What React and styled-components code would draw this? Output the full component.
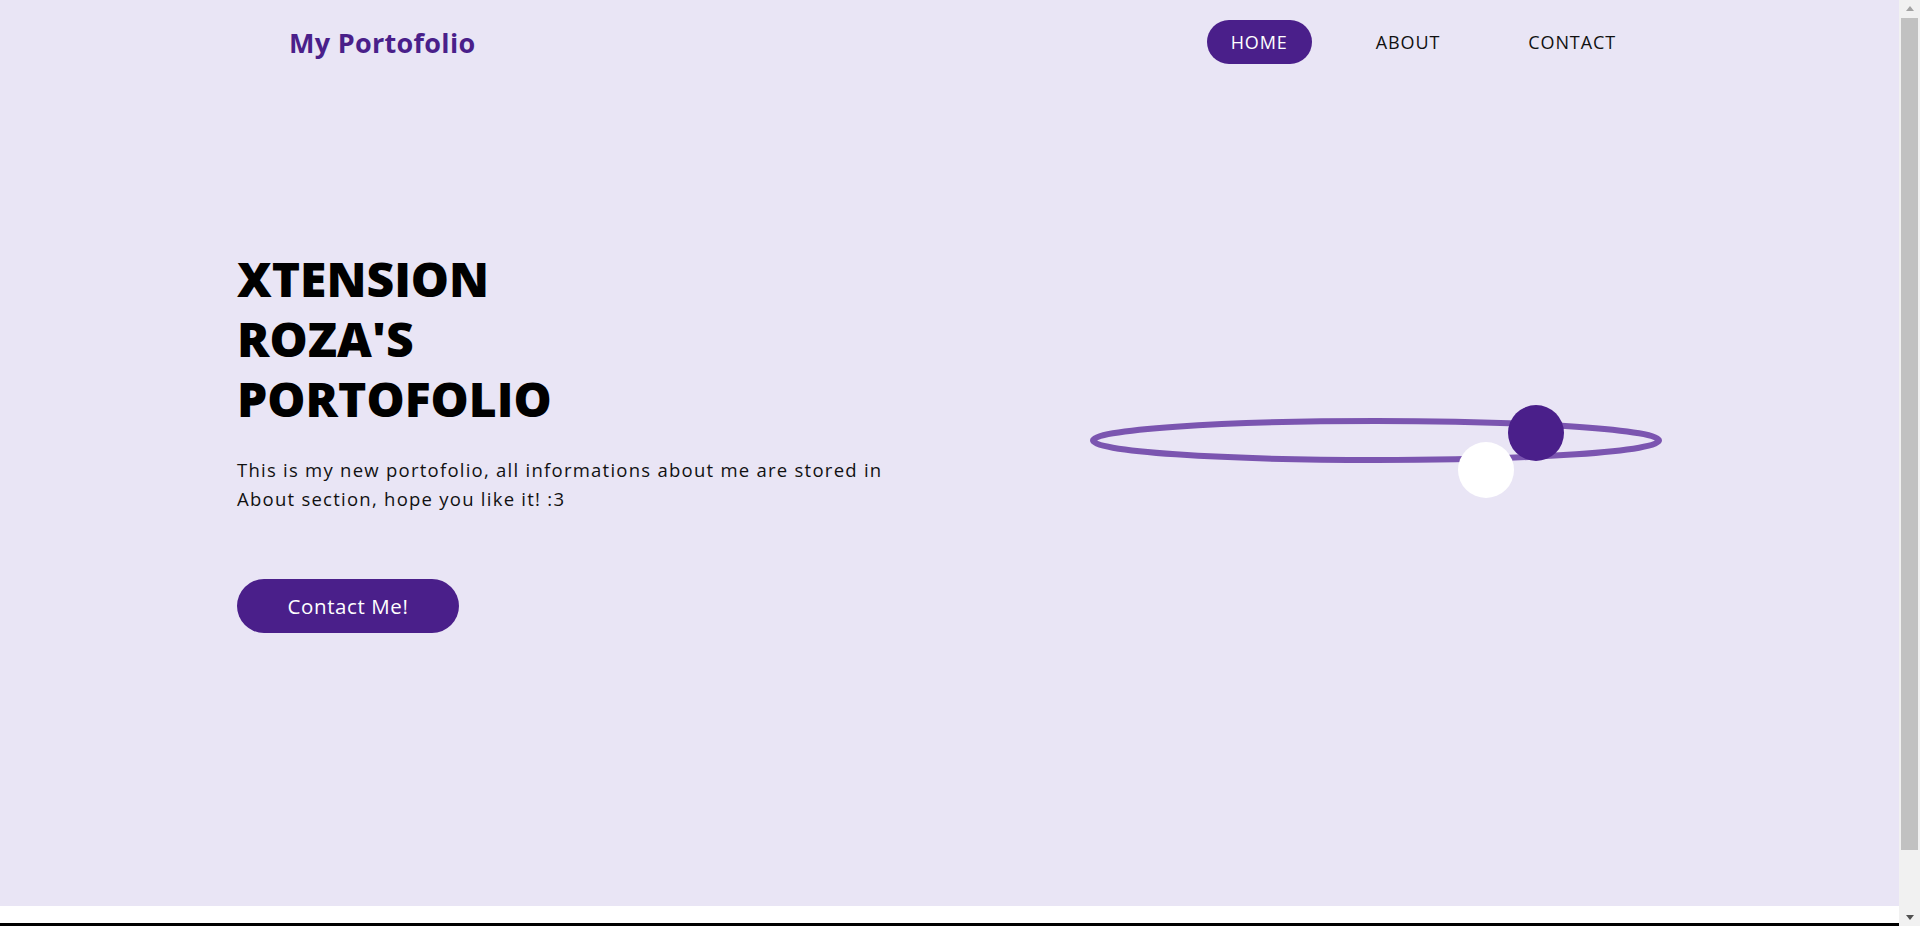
import React from 'react'
import styled, { createGlobalStyle } from 'styled-components'

const purple = '#4a1f8a'
const lavender = '#e9e5f5'

const GlobalStyle = createGlobalStyle`
  body {
    margin: 0;
    background: #fff;
    font-family: "Open Sans", "Noto Sans", sans-serif;
  }
`

const Page = styled.div`
  background: ${lavender};
  height: 906px;
  display: flex;
  flex-direction: column;
`

const Header = styled.header`
  height: 84px;
  display: flex;
  align-items: center;
  justify-content: space-between;
  padding: 0 280px 0 289px;
`

const Logo = styled.div`
  color: ${purple};
  font-size: 27px;
  font-weight: 700;
  letter-spacing: 0.3px;
`

const Nav = styled.nav`
  display: flex;
  gap: 40px;
`

const NavItem = styled.a`
  padding: 10px 24px;
  border-radius: 22px;
  font-size: 18px;
  line-height: 24px;
  letter-spacing: 0.9px;
  text-transform: uppercase;
  color: ${p => (p.$active ? '#fff' : '#111')};
  background: ${p => (p.$active ? purple : 'transparent')};
  cursor: pointer;
`

const Hero = styled.section`
  height: 714px;
  display: grid;
  grid-template-columns: 660px 572px;
  column-gap: 193px;
  align-items: center;
  padding-left: 237px;
`

const TextCol = styled.div`
  display: flex;
  flex-direction: column;
  align-items: flex-start;
`

const Title = styled.h1`
  margin: 0;
  font-size: 48px;
  line-height: 60px;
  font-weight: 800;
  color: #000;
`

const Intro = styled.p`
  margin: 26px 0 0;
  font-size: 18.5px;
  line-height: 29px;
  letter-spacing: 1.25px;
  color: #111;
  white-space: nowrap;
`

const ContactButton = styled.button`
  margin-top: 66px;
  width: 222px;
  height: 54px;
  border: none;
  border-radius: 27px;
  background: ${purple};
  color: #fff;
  font-family: inherit;
  font-size: 20.5px;
  letter-spacing: 0.6px;
  cursor: pointer;
`

const Orbit = styled.div`
  position: relative;
  width: 572px;
  height: 100px;
  margin-top: 18px;
`

const Ring = styled.svg`
  display: block;
`

const Dot = styled.span`
  position: absolute;
  left: ${p => p.$x}px;
  top: ${p => p.$y}px;
  width: 56px;
  height: 56px;
  border-radius: 50%;
  background: ${p => p.$color};
`

const Gap = styled.div`
  height: 17px;
  background: #fff;
`

const Footer = styled.footer`
  height: 70px;
  background: #000;
`

// browser scrollbar as seen in the screenshot
const ScrollBar = styled.div`
  position: fixed;
  top: 0;
  right: 0;
  width: 21px;
  height: 100vh;
  background: #f1f1f1;
  display: flex;
  flex-direction: column;
`

const ScrollArrow = styled.div`
  height: 17px;
  flex: none;
  display: flex;
  align-items: center;
  justify-content: center;
  &::after {
    content: '';
    border-left: 4.5px solid transparent;
    border-right: 4.5px solid transparent;
    ${p =>
      p.$down
        ? `border-top: 5px solid #505050;`
        : `border-bottom: 5px solid #a3a3a3;`}
  }
`

const Thumb = styled.div`
  height: 832px;
  margin: 1px 2px 0;
  background: #c1c1c1;
`

const Track = styled.div`
  flex: 1;
`

export default function App() {
  return (
    <>
      <GlobalStyle />
      <Page>
        <Header>
          <Logo>My Portofolio</Logo>
          <Nav>
            <NavItem $active>Home</NavItem>
            <NavItem>About</NavItem>
            <NavItem>Contact</NavItem>
          </Nav>
        </Header>
        <Hero>
          <TextCol>
            <Title>
              XTENSION
              <br />
              ROZA'S
              <br />
              PORTOFOLIO
            </Title>
            <Intro>
              This is my new portofolio, all informations about me are stored in
              <br />
              About section, hope you like it! :3
            </Intro>
            <ContactButton>Contact Me!</ContactButton>
          </TextCol>
          <Orbit>
            <Ring width="572" height="100" viewBox="0 0 572 100">
              <ellipse cx="286" cy="40.5" rx="283" ry="19.5" fill="none" stroke="#7b55b0" strokeWidth="6" />
            </Ring>
            <Dot $x={418} $y={5} $color={purple} />
            <Dot $x={368} $y={42} $color="#fff" />
          </Orbit>
        </Hero>
      </Page>
      <Gap />
      <Footer />
      <ScrollBar>
        <ScrollArrow />
        <Thumb />
        <Track />
        <ScrollArrow $down />
      </ScrollBar>
    </>
  )
}
